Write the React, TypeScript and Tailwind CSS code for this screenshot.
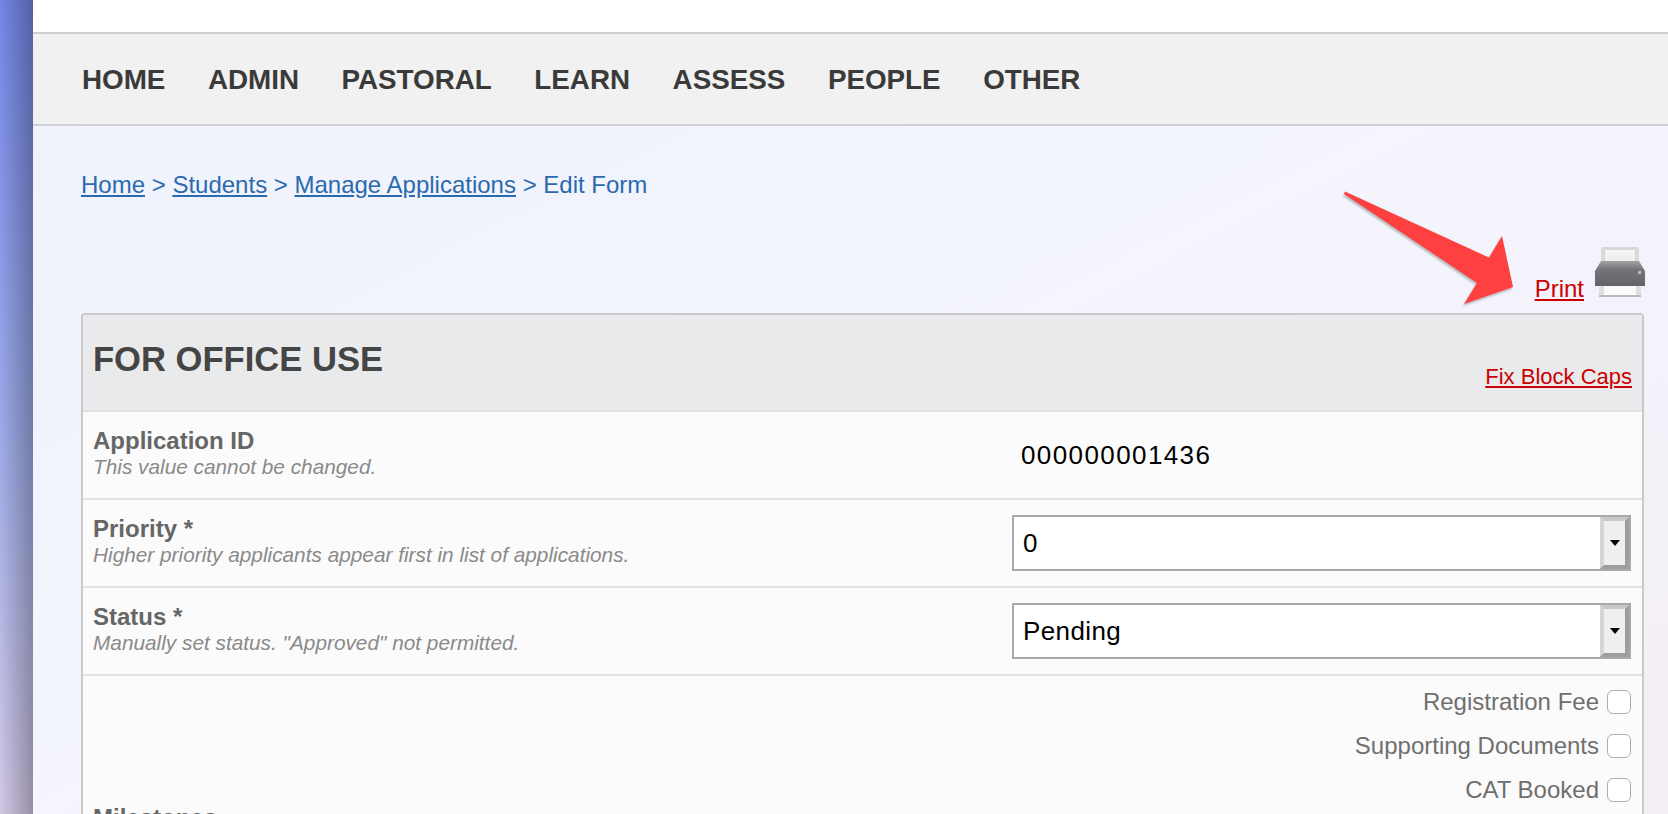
const font = "font-['Liberation_Sans',Arial,sans-serif]";

function Printer() {
  return (
    <svg width="50" height="50" viewBox="0 0 50 50" className="shrink-0 blur-[0.7px]">
      <defs>
        <linearGradient id="body" x1="0" y1="0" x2="0" y2="1">
          <stop offset="0" stopColor="#a2a3a5" />
          <stop offset="0.35" stopColor="#737477" />
          <stop offset="1" stopColor="#636467" />
        </linearGradient>
        <linearGradient id="paper" x1="0" y1="0" x2="0" y2="1">
          <stop offset="0" stopColor="#f6f6f6" />
          <stop offset="1" stopColor="#ebebeb" />
        </linearGradient>
      </defs>
      <path d="M6 2 Q6 0 8 0 H42 Q44 0 44 2 V18 H6 Z" fill="#d9d9da" />
      <rect x="10" y="3" width="30" height="14" fill="url(#paper)" />
      <path d="M6 14 H44 L50 24 V39 H0 V24 Z" fill="url(#body)" />
      <rect x="43" y="24" width="3" height="3" fill="#b8babc" />
      <rect x="4" y="39" width="42" height="11" fill="#dedede" />
      <rect x="9" y="39" width="32" height="9" fill="#fafafa" />
      <rect x="4" y="48" width="42" height="2" fill="#b8b9bb" />
    </svg>
  );
}

function Select({ value }: { value: string }) {
  return (
    <div className="flex h-14 w-[619px] items-stretch border-2 border-[#a9a9a9] bg-white">
      <div className="flex flex-1 items-center pl-[9px] text-[26px] tracking-[0.4px] text-black">{value}</div>
      <div className="flex w-[29px] items-center justify-center border-t-[4px] border-r-[4px] border-b-[4px] border-l-[4px] border-t-[#c9c9c9] border-r-[#9d9d9d] border-b-[#9d9d9d] border-l-[#d6d6d6] bg-[#efefef]">
        <div className="h-0 w-0 border-x-[5px] border-t-[6px] border-x-transparent border-t-black" />
      </div>
    </div>
  );
}

function Row({ label, hint, children }: { label: string; hint: string; children: React.ReactNode }) {
  return (
    <div className="flex h-[88px] items-center border-b-2 border-[#e1e1e1] pr-[11px] pl-[10px]">
      <div className="flex-1 pb-[5px]">
        <div className="text-[24px] leading-[28px] font-bold text-[#666666]">{label}</div>
        <div className="text-[20.8px] leading-[24px] text-[#8a8a8a] italic">{hint}</div>
      </div>
      <div className="w-[619px]">{children}</div>
    </div>
  );
}

function Check({ label }: { label: string }) {
  return (
    <div className="flex h-11 items-center justify-end gap-2">
      <span className="text-2xl text-[#6f6f6f]">{label}</span>
      <span className="h-6 w-6 rounded-[6px] border border-[#adadad] bg-white" />
    </div>
  );
}

export default function App() {
  return (
    <div className={`${font} relative flex h-[814px] w-[1668px] overflow-hidden bg-white`}>
      <div className="w-[33px] shrink-0 bg-gradient-to-b from-[#7486e6] via-[#9aa9e8] to-[#d2c8e6]">
        <div className="h-full w-full bg-gradient-to-r from-transparent to-[#00000048]" />
      </div>
      <div className="flex min-w-0 flex-1 flex-col bg-gradient-to-br from-[#eff2fc] via-[#f4f5fd] to-[#f4eef6]">
        <div className="h-[32px] shrink-0 bg-white" />
        <nav className="flex h-[94px] shrink-0 items-center gap-[42.5px] border-y-2 border-[#d0d0d2] bg-[#f1f1f1] pt-[2px] pl-[49px] text-[27.8px] font-bold text-[#3a3a3a]">
          <span>HOME</span>
          <span>ADMIN</span>
          <span>PASTORAL</span>
          <span>LEARN</span>
          <span>ASSESS</span>
          <span>PEOPLE</span>
          <span>OTHER</span>
        </nav>
        <div className="pt-[45px] pl-[48px] text-2xl leading-[28px] text-[#2a6aae]">
          <a className="underline">Home</a> &gt; <a className="underline">Students</a> &gt;{" "}
          <a className="underline">Manage Applications</a> &gt; Edit Form
        </div>
        <div className="mt-[48px] mb-[12px] flex h-[54px] items-end justify-end gap-[11px] pr-[23px]">
          <a className="mb-[-2px] text-[24px] leading-[28px] text-[#cc0000] underline">Print</a>
          <div className="mb-[4px]"><Printer /></div>
        </div>
        <div className="mr-[24px] ml-[48px] rounded-t-[4px] border-x-2 border-t-2 border-[#c9c9c9] bg-[#fbfbfb]">
          <div className="flex h-[97px] items-end justify-between border-b-2 border-[#e1e1e1] bg-[#e9eaec] pr-[10px] pl-[10px]">
            <h1 className="mb-[31px] text-[34.6px] leading-[40px] font-bold text-[#454545]">FOR OFFICE USE</h1>
            <a className="mb-[20px] text-[22px] leading-[26px] text-[#cc0000] underline">Fix Block Caps</a>
          </div>
          <Row label="Application ID" hint="This value cannot be changed.">
            <div className="pl-[9px] text-[26px] tracking-[1.4px] text-black">000000001436</div>
          </Row>
          <Row label="Priority *" hint="Higher priority applicants appear first in list of applications.">
            <Select value="0" />
          </Row>
          <Row label="Status *" hint="Manually set status. &quot;Approved&quot; not permitted.">
            <Select value="Pending" />
          </Row>
          <div className="flex h-[284px] pr-[11px] pl-[10px]">
            <div className="flex flex-1 items-center text-[24px] font-bold text-[#666666]">Milestones</div>
            <div className="w-[619px] pt-[4px]">
              <Check label="Registration Fee" />
              <Check label="Supporting Documents" />
              <Check label="CAT Booked" />
            </div>
          </div>
        </div>
      </div>
      <svg width="180" height="125" viewBox="0 0 180 125" className="pointer-events-none absolute top-[188px] left-[1340px]">
        <path d="M5 3.5 L149 69.5 L162 48 L173 99 L124 116 L137 95 L4 6 Z" fill="#000" opacity="0.25" transform="translate(-1 2)" className="blur-[1px]" />
        <path d="M5 3.5 L149 69.5 L162 48 L173 99 L124 116 L137 95 L4 6 Z" fill="#ff4040" />
      </svg>
    </div>
  );
}
